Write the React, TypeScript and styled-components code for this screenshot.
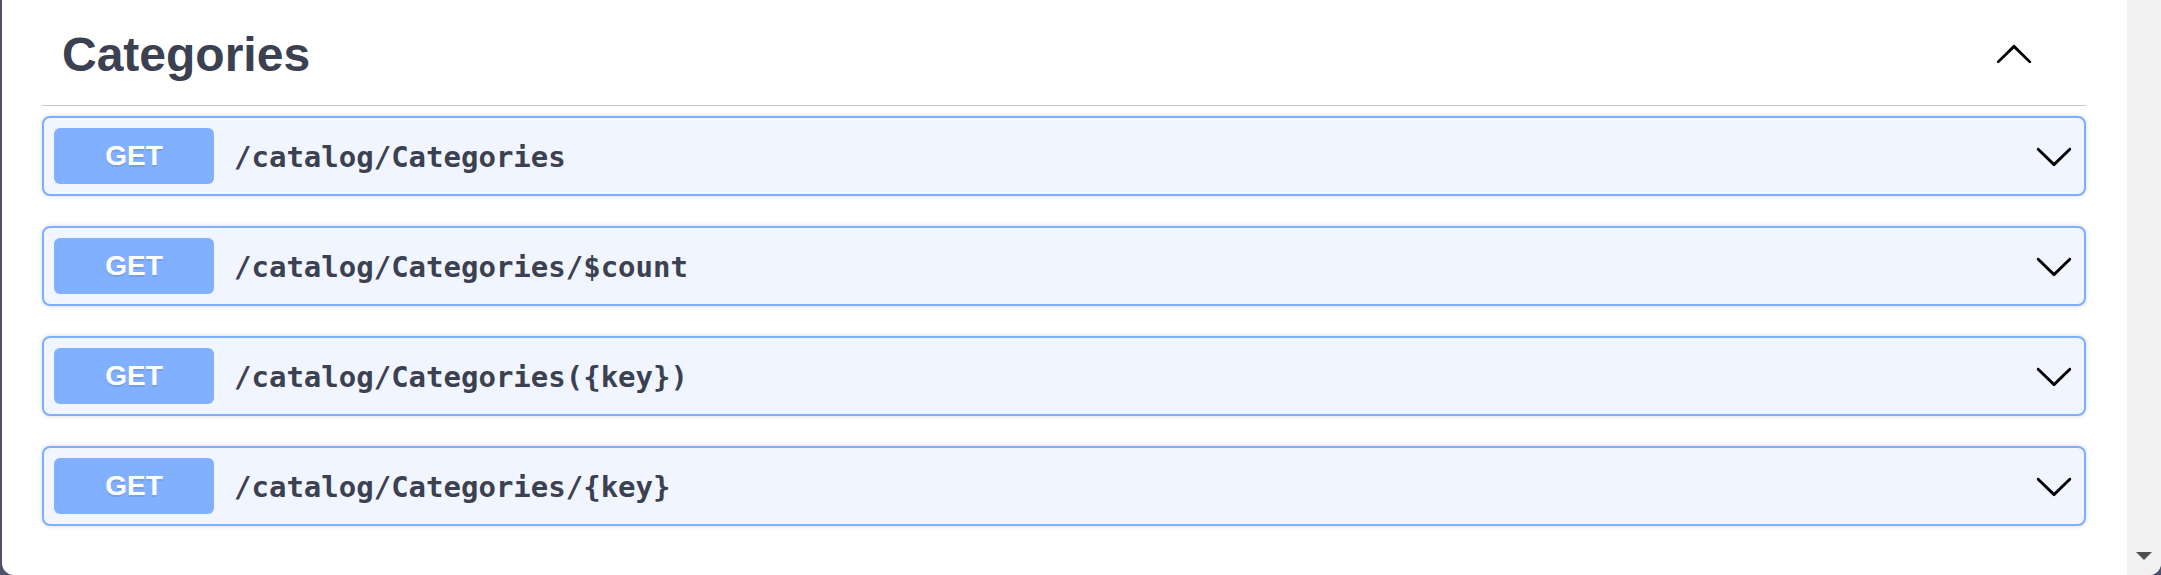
import React from "react";
import styled, { createGlobalStyle } from "styled-components";

const GlobalStyle = createGlobalStyle`
  html, body {
    margin: 0;
    padding: 0;
    background: #4d516b;
  }
  #root {
    width: 2161px;
    height: 575px;
  }
`;

const Frame = styled.div`
  box-sizing: border-box;
  width: 2161px;
  height: 575px;
  padding: 0 0 0 2px;
  background: #4d516b;
  display: flex;
`;

const Panel = styled.div`
  flex: 1;
  display: flex;
  background: #ffffff;
  border-radius: 0 0 12px 12px;
  overflow: hidden;
`;

const Content = styled.main`
  flex: 1;
  min-width: 0;
  padding: 0 41px 0 40px;
`;

const Scrollbar = styled.div`
  width: 34px;
  background: #f1f1f1;
  display: flex;
  align-items: flex-end;
  justify-content: center;
`;

const ScrollArrow = styled.div`
  width: 0;
  height: 0;
  border-left: 8px solid transparent;
  border-right: 8px solid transparent;
  border-top: 8px solid #505050;
  margin-bottom: 15px;
`;

const TagHeader = styled.div`
  display: flex;
  align-items: center;
  height: 105px;
  border-bottom: 1px solid #c4c4c9;
`;

const TagTitle = styled.h3`
  flex: 1;
  margin: 4px 0 0 0;
  padding-left: 20px;
  font-family: "Liberation Sans", Arial, sans-serif;
  font-weight: 700;
  font-size: 48px;
  line-height: 48px;
  color: #3b4151;
`;

const IconButton = styled.button<{ $right: number }>`
  border: none;
  background: none;
  padding: 0;
  margin-right: ${(p) => p.$right}px;
  width: 40px;
  height: 40px;
  display: flex;
  cursor: pointer;
`;

const OpList = styled.div`
  display: flex;
  flex-direction: column;
  gap: 30px;
  padding-top: 10px;
`;

const OpBlock = styled.div`
  box-sizing: border-box;
  height: 80px;
  display: flex;
  align-items: center;
  padding: 0 10px;
  background: #f0f5ff;
  border: 2px solid #80aeff;
  border-radius: 8px;
  box-shadow: 0 0 5px rgba(0, 0, 0, 0.16);
`;

const MethodBadge = styled.span`
  width: 160px;
  height: 56px;
  flex: none;
  display: flex;
  align-items: center;
  justify-content: center;
  background: #80b0ff;
  border-radius: 6px;
  color: #ffffff;
  font-family: "Liberation Sans", Arial, sans-serif;
  font-weight: 700;
  font-size: 28px;
  text-shadow: 0 2px 0 rgba(0, 0, 0, 0.1);
`;

const PathText = styled.span`
  flex: 1;
  margin-left: 20px;
  font-family: "DejaVu Sans Mono", "Liberation Mono", monospace;
  font-weight: 700;
  font-size: 29px;
  color: #3b4151;
  padding-top: 2px;
`;

const ChevronDown = () => (
  <svg width="40" height="40" viewBox="0 0 20 20" aria-hidden="true">
    <path
      fill="#000"
      d="M17.418 6.109c.272-.268.709-.268.979 0s.271.701 0 .969l-7.908 7.83c-.27.268-.707.268-.979 0l-7.908-7.83c-.27-.268-.27-.701 0-.969.271-.268.709-.268.979 0L10 13.25l7.418-7.141z"
    />
  </svg>
);

const ChevronUp = () => (
  <svg width="40" height="40" viewBox="0 0 20 20" aria-hidden="true">
    <path
      fill="#000"
      d="M17.418 14.908c.272.268.709.268.979 0s.271-.701 0-.969l-7.908-7.83c-.27-.268-.707-.268-.979 0l-7.908 7.83c-.27.268-.27.701 0 .969.271.268.709.268.979 0L10 7.767l7.418 7.141z"
    />
  </svg>
);

const paths = [
  "/catalog/Categories",
  "/catalog/Categories/$count",
  "/catalog/Categories({key})",
  "/catalog/Categories/{key}",
];

export default function App() {
  return (
    <>
      <GlobalStyle />
      <Frame>
        <Panel>
          <Content>
            <TagHeader>
              <TagTitle>Categories</TagTitle>
              <IconButton $right={52} aria-label="Collapse">
                <ChevronUp />
              </IconButton>
            </TagHeader>
            <OpList>
              {paths.map((p) => (
                <OpBlock key={p}>
                  <MethodBadge>GET</MethodBadge>
                  <PathText>{p}</PathText>
                  <IconButton $right={0} aria-label="Expand">
                    <ChevronDown />
                  </IconButton>
                </OpBlock>
              ))}
            </OpList>
          </Content>
          <Scrollbar>
            <ScrollArrow />
          </Scrollbar>
        </Panel>
      </Frame>
    </>
  );
}
